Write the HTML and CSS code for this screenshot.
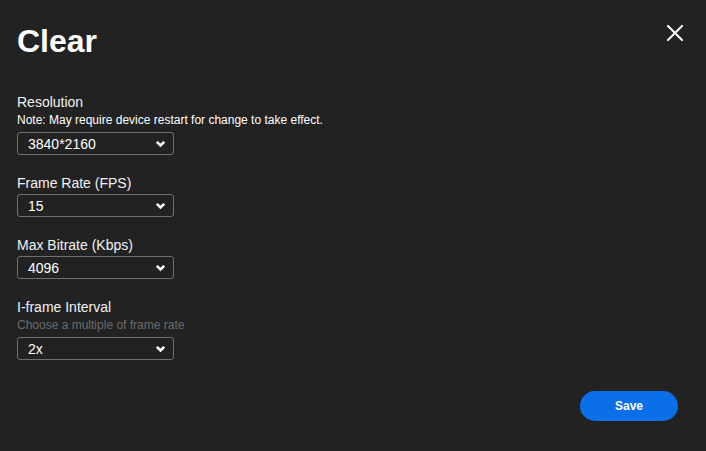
FILE: index.html
```html
<!DOCTYPE html>
<html lang="en">
<head>
    <meta charset="UTF-8">
    <title>Clear</title>
    <link rel="stylesheet" href="styles.css">
</head>
<body>
    <div class="dialog">
        <div class="dialog-header">
            <h1>Clear</h1>
            <button class="close-button" aria-label="Close">
                <svg width="16" height="16" viewBox="0 0 16 16">
                    <path d="M1 1 L15 15 M15 1 L1 15" stroke="#ffffff" stroke-width="2" stroke-linecap="square" fill="none"/>
                </svg>
            </button>
        </div>

        <div class="form-group">
            <label>Resolution</label>
            <div class="note">Note: May require device restart for change to take effect.</div>
            <div class="select">
                <span>3840*2160</span>
                <svg width="11" height="8" viewBox="0 0 11 8"><path d="M1.8 1.8 L5.5 5.5 L9.2 1.8" stroke="#ffffff" stroke-width="2.6" fill="none"/></svg>
            </div>
        </div>

        <div class="form-group">
            <label>Frame Rate (FPS)</label>
            <div class="select">
                <span>15</span>
                <svg width="11" height="8" viewBox="0 0 11 8"><path d="M1.8 1.8 L5.5 5.5 L9.2 1.8" stroke="#ffffff" stroke-width="2.6" fill="none"/></svg>
            </div>
        </div>

        <div class="form-group">
            <label>Max Bitrate (Kbps)</label>
            <div class="select">
                <span>4096</span>
                <svg width="11" height="8" viewBox="0 0 11 8"><path d="M1.8 1.8 L5.5 5.5 L9.2 1.8" stroke="#ffffff" stroke-width="2.6" fill="none"/></svg>
            </div>
        </div>

        <div class="form-group">
            <label>I-frame Interval</label>
            <div class="hint">Choose a multiple of frame rate</div>
            <div class="select">
                <span>2x</span>
                <svg width="11" height="8" viewBox="0 0 11 8"><path d="M1.8 1.8 L5.5 5.5 L9.2 1.8" stroke="#ffffff" stroke-width="2.6" fill="none"/></svg>
            </div>
        </div>

        <div class="dialog-footer">
            <button class="save-button">Save</button>
        </div>
    </div>
</body>
</html>
```

FILE: styles.css
```css
body {
    margin: 0;
    background-color: #222222;
    color: #f2f2f2;
    font-family: "Liberation Sans", Arial, sans-serif;
}

.dialog {
    padding: 23px 23px 0 17px;
}

.dialog-header {
    display: flex;
    justify-content: space-between;
    align-items: flex-start;
    margin-bottom: 34px;
}

.dialog-header h1 {
    margin: 0;
    font-size: 32px;
    line-height: 37px;
    font-weight: bold;
    color: #ffffff;
}

.close-button {
    background: none;
    border: none;
    padding: 0;
    margin-top: 2px;
    cursor: pointer;
    display: flex;
}

.form-group {
    margin-bottom: 20px;
}

.form-group label {
    display: block;
    font-size: 14px;
    line-height: 17px;
    margin-bottom: 2px;
}

.note {
    font-size: 12px;
    line-height: 14px;
    color: #ffffff;
    margin-bottom: 5px;
}

.hint {
    font-size: 12px;
    line-height: 14px;
    color: #6b6b6b;
    margin-bottom: 5px;
}

.select {
    width: 138px;
    height: 21px;
    border: 1px solid #707070;
    border-radius: 3px;
    display: flex;
    align-items: center;
    justify-content: space-between;
    padding: 0 7px 0 10px;
    font-size: 14px;
    color: #ffffff;
}

.select svg {
    display: block;
}

.dialog-footer {
    display: flex;
    justify-content: flex-end;
    margin-top: 31px;
    padding-right: 5px;
}

.save-button {
    width: 98px;
    height: 30px;
    border: none;
    border-radius: 15px;
    background-color: #0a6fe8;
    color: #ffffff;
    font-family: "Liberation Sans", Arial, sans-serif;
    font-size: 12px;
    font-weight: bold;
    cursor: pointer;
}
```
